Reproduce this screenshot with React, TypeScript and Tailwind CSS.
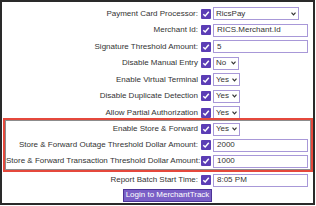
import React from 'react'

type Field =
  | { kind: 'select'; value: string; width: string }
  | { kind: 'text'; value: string }

type RowDef = { label: string; field: Field }

const TOP_ROWS: RowDef[] = [
  { label: 'Payment Card Processor:', field: { kind: 'select', value: 'RicsPay', width: 'w-[86px]' } },
  { label: 'Merchant Id:', field: { kind: 'text', value: 'RICS.Merchant.Id' } },
  { label: 'Signature Threshold Amount:', field: { kind: 'text', value: '5' } },
  { label: 'Disable Manual Entry', field: { kind: 'select', value: 'No', width: 'w-[26px]' } },
  { label: 'Enable Virtual Terminal', field: { kind: 'select', value: 'Yes', width: 'w-[27px]' } },
  { label: 'Disable Duplicate Detection', field: { kind: 'select', value: 'Yes', width: 'w-[27px]' } },
  { label: 'Allow Partial Authorization', field: { kind: 'select', value: 'Yes', width: 'w-[27px]' } },
]

const BOXED_ROWS: RowDef[] = [
  { label: 'Enable Store & Forward', field: { kind: 'select', value: 'Yes', width: 'w-[27px]' } },
  { label: 'Store & Forward Outage Threshold Dollar Amount:', field: { kind: 'text', value: '2000' } },
  { label: 'Store & Forward Transaction Threshold Dollar Amount:', field: { kind: 'text', value: '1000' } },
]

function Check() {
  return (
    <div className="w-[10px] h-[10px] bg-[#5b3db5] rounded-[1px] flex items-center justify-center shrink-0">
      <svg width="8" height="8" viewBox="0 0 8 8">
        <path d="M1.3 4.2 L3.2 6 L6.8 1.8" stroke="white" strokeWidth="1.5" fill="none" />
      </svg>
    </div>
  )
}

function Input({ field }: { field: Field }) {
  if (field.kind === 'select') {
    return (
      <div
        className={`${field.width} h-[13px] border border-[#a898d8] bg-white flex items-center justify-between pl-[2px] pr-[2px]`}
      >
        <span>{field.value}</span>
        <svg width="5" height="4" viewBox="0 0 5 4" className="shrink-0">
          <path d="M0.5 0.7 L2.5 2.8 L4.5 0.7" stroke="#333" strokeWidth="1.2" fill="none" />
        </svg>
      </div>
    )
  }
  return (
    <div className="w-[95px] h-[13px] border border-[#a898d8] bg-white flex items-center pl-[3px]">
      <span>{field.value}</span>
    </div>
  )
}

function Row({ row, labelWidth, height }: { row: RowDef; labelWidth: string; height: string }) {
  return (
    <div className={`flex items-center ${height}`}>
      <div className={`${labelWidth} text-right pr-[3px] whitespace-nowrap`}>{row.label}</div>
      <Check />
      <div className="ml-[2px]">
        <Input field={row.field} />
      </div>
    </div>
  )
}

export default function App() {
  return (
    <div
      className="w-[315px] h-[205px] border-2 border-[#2a2a2a] bg-white text-[8px] leading-none text-[#333]"
      style={{ fontFamily: '"Liberation Sans", Arial, sans-serif' }}
    >
      <div className="pt-[3.5px] flex flex-col">
        {TOP_ROWS.map((r) => (
          <Row key={r.label} row={r} labelWidth="w-[199px]" height="h-[16.5px]" />
        ))}
        {/* highlighted store & forward block */}
        <div className="-mt-[3px] ml-[1px] w-[310px] border-2 border-[#e5483c]">
          <div className="border border-[#8c8c8c] flex flex-col">
            {BOXED_ROWS.map((r) => (
              <Row key={r.label} row={r} labelWidth="w-[195px]" height="h-[16px]" />
            ))}
          </div>
        </div>
        <Row
          row={{ label: 'Report Batch Start Time:', field: { kind: 'text', value: '8:05 PM' } }}
          labelWidth="w-[199px]"
          height="h-[16.5px]"
        />
        <div className="ml-[121px]">
          <button className="w-[89px] h-[13px] bg-[#7a5fc6] border border-[#4c3396] text-white text-[8px] leading-none flex items-center justify-center">
            Login to MerchantTrack
          </button>
        </div>
      </div>
    </div>
  )
}
